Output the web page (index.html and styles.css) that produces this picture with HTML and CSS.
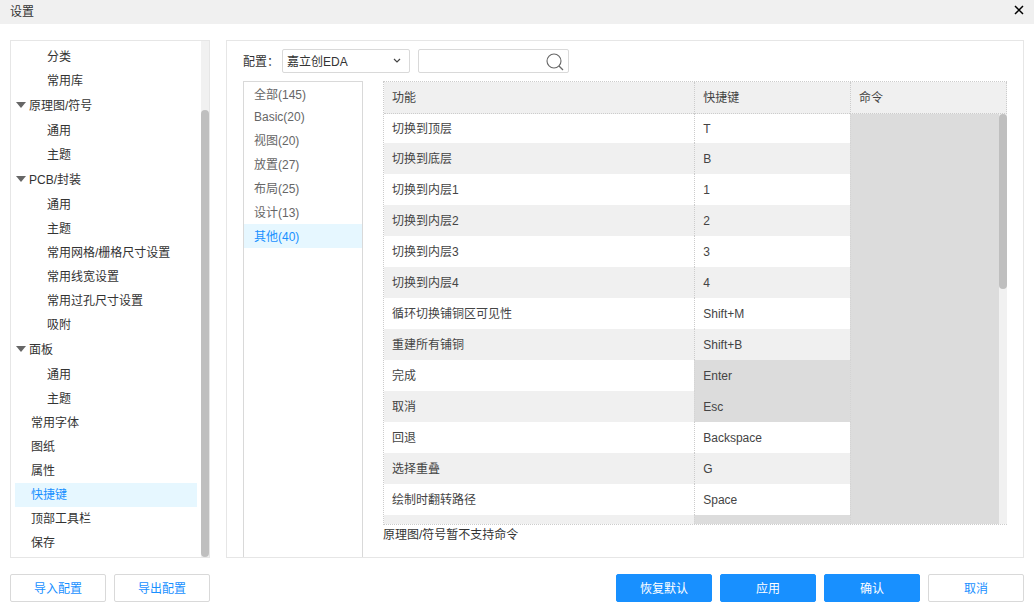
FILE: index.html
```html
<!DOCTYPE html>
<html lang="zh-CN">
<head>
<meta charset="utf-8">
<title>设置</title>
<link rel="stylesheet" href="styles.css">
</head>
<body>
<div class="dialog">
  <header class="titlebar">
    <h1 class="title">设置</h1>
    <button class="close" type="button" aria-label="关闭">
      <svg width="10" height="10" viewBox="0 0 10 10"><path d="M1 1L9 9M9 1L1 9" stroke="#000" stroke-width="1.5" fill="none"/></svg>
    </button>
  </header>

  <main class="content">
    <nav class="sidebar" aria-label="设置分类">
      <ul class="tree">
        <li class="leaf">分类</li>
        <li class="leaf">常用库</li>
        <li class="group"><span class="arrow"></span>原理图/符号</li>
        <li class="leaf">通用</li>
        <li class="leaf">主题</li>
        <li class="group"><span class="arrow"></span>PCB/封装</li>
        <li class="leaf">通用</li>
        <li class="leaf">主题</li>
        <li class="leaf">常用网格/栅格尺寸设置</li>
        <li class="leaf">常用线宽设置</li>
        <li class="leaf">常用过孔尺寸设置</li>
        <li class="leaf">吸附</li>
        <li class="group"><span class="arrow"></span>面板</li>
        <li class="leaf">通用</li>
        <li class="leaf">主题</li>
        <li class="item">常用字体</li>
        <li class="item">图纸</li>
        <li class="item">属性</li>
        <li class="item active">快捷键</li>
        <li class="item">顶部工具栏</li>
        <li class="item">保存</li>
      </ul>
      <div class="scroll-track tree-track"><div class="scroll-thumb tree-thumb"></div></div>
    </nav>

    <section class="panel">
      <div class="toolbar">
        <label class="config-label" for="config">配置：</label>
        <div class="select-box">
          <select class="select" id="config"><option>嘉立创EDA</option></select>
          <svg class="chevron" width="8" height="6" viewBox="0 0 8 6"><path d="M1 1L4 4L7 1" fill="none" stroke="#444" stroke-width="1.2"/></svg>
        </div>
        <div class="search-box">
          <input class="search" type="text" aria-label="搜索">
          <button class="search-button" type="button" aria-label="搜索">
            <svg width="18" height="18" viewBox="0 0 18 18"><circle cx="8" cy="8" r="7" fill="none" stroke="#666" stroke-width="1.1"/><path d="M13 13L17 17" stroke="#666" stroke-width="1.3"/></svg>
          </button>
        </div>
      </div>

      <div class="columns">
        <ul class="categories">
          <li class="category">全部(145)</li>
          <li class="category latin">Basic(20)</li>
          <li class="category">视图(20)</li>
          <li class="category">放置(27)</li>
          <li class="category">布局(25)</li>
          <li class="category">设计(13)</li>
          <li class="category active">其他(40)</li>
        </ul>

        <div class="shortcuts">
          <div class="table-view">
            <table class="table">
              <thead>
                <tr><th class="col-name">功能</th><th class="col-key">快捷键</th><th class="col-command">命令</th></tr>
              </thead>
              <tbody>
                <tr><td>切换到顶层</td><td>T</td><td class="locked"></td></tr>
                <tr><td>切换到底层</td><td>B</td><td class="locked"></td></tr>
                <tr><td>切换到内层1</td><td>1</td><td class="locked"></td></tr>
                <tr><td>切换到内层2</td><td>2</td><td class="locked"></td></tr>
                <tr><td>切换到内层3</td><td>3</td><td class="locked"></td></tr>
                <tr><td>切换到内层4</td><td>4</td><td class="locked"></td></tr>
                <tr><td>循环切换铺铜区可见性</td><td>Shift+M</td><td class="locked"></td></tr>
                <tr><td>重建所有铺铜</td><td>Shift+B</td><td class="locked"></td></tr>
                <tr><td>完成</td><td class="locked">Enter</td><td class="locked"></td></tr>
                <tr><td>取消</td><td class="locked">Esc</td><td class="locked"></td></tr>
                <tr><td>回退</td><td>Backspace</td><td class="locked"></td></tr>
                <tr><td>选择重叠</td><td>G</td><td class="locked"></td></tr>
                <tr><td>绘制时翻转路径</td><td>Space</td><td class="locked"></td></tr>
                <tr><td></td><td class="locked"></td><td class="locked"></td></tr>
              </tbody>
            </table>
            <div class="scroll-track table-track"><div class="scroll-thumb table-thumb"></div></div>
          </div>
          <p class="note">原理图/符号暂不支持命令</p>
        </div>
      </div>
    </section>
  </main>

  <footer class="footer">
    <button class="button" type="button">导入配置</button>
    <button class="button" type="button">导出配置</button>
    <span class="spacer"></span>
    <button class="button primary" type="button">恢复默认</button>
    <button class="button primary" type="button">应用</button>
    <button class="button primary" type="button">确认</button>
    <button class="button" type="button">取消</button>
  </footer>
</div>
</body>
</html>
```

FILE: styles.css
```css
* {
  box-sizing: border-box;
}

body {
  margin: 0;
  background: #fff;
  color: #333;
  font: 12px/20px "Liberation Sans", "Noto Sans CJK SC", sans-serif;
}

button,
input,
select {
  font: inherit;
  color: inherit;
}

ul {
  margin: 0;
  padding: 0;
  list-style: none;
}

.dialog {
  display: flex;
  flex-direction: column;
  height: 100vh;
}

.titlebar {
  display: flex;
  align-items: center;
  justify-content: space-between;
  height: 24px;
  padding: 0 10px;
  background: #f0f0f0;
}

.title {
  margin: 0;
  font-size: 12px;
  font-weight: normal;
}

.close {
  display: flex;
  padding: 0 0 4px;
  border: 0;
  background: none;
}

.content {
  display: flex;
  flex: 1;
  gap: 16px;
  min-height: 0;
  padding: 16px 10px;
}

/* Category tree */

.sidebar {
  display: flex;
  flex: none;
  width: 200px;
  border: 1px solid #e6e6e6;
  overflow: hidden;
}

.tree {
  flex: 1;
  padding: 4px;
}

.leaf,
.item {
  height: 24px;
  line-height: 24px;
  padding-left: 16px;
}

.leaf {
  padding-left: 32px;
}

.group {
  display: flex;
  align-items: center;
  gap: 3px;
  height: 26px;
  padding-left: 1px;
}

.arrow {
  width: 10px;
  height: 6px;
  margin-bottom: 2px;
  background: #666;
  clip-path: polygon(0 0, 100% 0, 50% 100%);
}

.active {
  background: #e6f7ff;
  color: #1890ff;
}

.scroll-track {
  width: 8px;
  background: #f1f1f1;
}

.scroll-thumb {
  border-radius: 4px;
  background: #bfbfbf;
}

.tree-track {
  display: flex;
  padding-top: 69px;
}

.tree-thumb {
  flex: 1;
}

/* Shortcut panel */

.panel {
  display: flex;
  flex: 1;
  flex-direction: column;
  gap: 8px;
  min-width: 0;
  padding: 8px 16px 0;
  border: 1px solid #e6e6e6;
}

.toolbar {
  display: flex;
  align-items: center;
}

.config-label {
  width: 39px;
  padding-top: 2px;
}

.select-box,
.search-box {
  position: relative;
  width: 128px;
  height: 24px;
}

.search-box {
  width: 151px;
  margin-left: 8px;
}

.select,
.search {
  display: block;
  width: 100%;
  height: 24px;
  padding: 2px 4px 0;
  border: 1px solid #d9d9d9;
  border-radius: 2px;
  background: #fff;
  appearance: none;
}

.search {
  padding-right: 28px;
}

.chevron {
  position: absolute;
  top: 9px;
  right: 9px;
  pointer-events: none;
}

.search-button {
  position: absolute;
  top: 4px;
  right: 5px;
  display: flex;
  padding: 0;
  border: 0;
  background: none;
}

.columns {
  display: flex;
  flex: 1;
  gap: 20px;
  min-height: 0;
}

.categories {
  flex: none;
  width: 120px;
  border: 1px solid #d9d9d9;
  border-bottom: 0;
}

.category {
  height: 24px;
  padding-left: 10px;
  line-height: 26px;
}

.category:not(.active) {
  color: #666;
}

.latin {
  height: 22px;
  line-height: 22px;
}

.shortcuts {
  display: flex;
  flex: 1;
  flex-direction: column;
  min-width: 0;
  padding-bottom: 12px;
}

.table-view {
  position: relative;
  flex: 1;
  min-height: 0;
  border: 1px dotted #ccc;
  border-right: 0;
  overflow: hidden;
}

.table {
  width: 100%;
  border-spacing: 0;
  table-layout: fixed;
  color: #444;
}

.table th,
.table td {
  height: 31px;
  padding: 0 8px;
  border-left: 1px dotted #ccc;
  font-weight: normal;
  text-align: left;
  white-space: nowrap;
}

.table th:first-child,
.table td:first-child {
  border-left: 0;
}

.table th {
  height: 32px;
  border-bottom: 1px dotted #ccc;
  background: #f0f0f0;
}

.table th:last-child {
  border-right: 1px dotted #ccc;
}

.table tr:first-child td {
  height: 29px;
}

.table tbody tr:nth-child(even) {
  background: #f0f0f0;
}

.table .locked {
  border-left-color: #d4d4d4;
  background: #dcdcdc;
}

.col-name {
  width: 49.8%;
}

.col-key {
  width: 25%;
}

.col-command {
  width: 25.2%;
}

.table-track {
  position: absolute;
  top: 32px;
  right: 0;
  bottom: 0;
}

.table-thumb {
  height: 175px;
}

.note {
  margin: 0;
}

/* Actions */

.footer {
  display: flex;
  gap: 8px;
  padding: 0 10px 9px;
}

.spacer {
  flex: 1;
}

.button {
  width: 96px;
  height: 28px;
  padding: 2px 0 0;
  border: 1px solid #d9d9d9;
  border-radius: 2px;
  background: #fff;
  color: #1890ff;
}

.primary {
  border-color: #1890ff;
  background: #1890ff;
  color: #fff;
}
```
